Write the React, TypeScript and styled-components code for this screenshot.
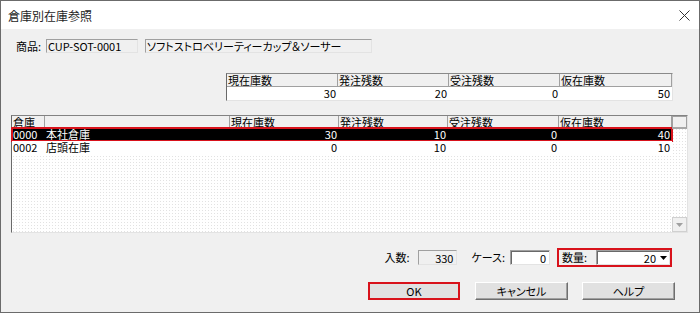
import React from "react";
import styled, { createGlobalStyle } from "styled-components";

const RED = "#d8121b";

const GlobalStyle = createGlobalStyle`
  html, body { margin: 0; padding: 0; background: #ffffff; }
  body {
    font-family: "Noto Sans CJK JP", "Noto Sans", sans-serif;
    font-size: 11px;
    color: #000;
    font-feature-settings: "palt";
  }
  * { box-sizing: border-box; }
`;

const Window = styled.div`
  width: 700px;
  height: 313px;
  border: 1px solid #6b6b6b;
  background: #f0f0f0;
  display: flex;
  flex-direction: column;
  overflow: hidden;
`;

const TitleBar = styled.div`
  height: 28px;
  flex-shrink: 0;
  background: #ffffff;
  display: flex;
  align-items: center;
  justify-content: space-between;
  padding: 0 9px 0 7px;
  font-size: 12px;
  color: #1e1e1e;
`;

const GoodsRow = styled.div`
  margin-top: 10px;
  height: 14px;
  display: flex;
  align-items: center;
  padding-left: 15px;
`;

const Label = styled.span<{ w?: number }>`
  width: ${(p) => (p.w ? `${p.w}px` : "auto")};
  flex-shrink: 0;
  line-height: 13px;
  white-space: nowrap;
`;

const Field = styled.div<{ w: number; white?: boolean; right?: boolean; ml?: number; h?: number }>`
  width: ${(p) => p.w}px;
  height: ${(p) => p.h ?? 14}px;
  margin-left: ${(p) => p.ml ?? 0}px;
  flex-shrink: 0;
  background: ${(p) => (p.white ? "#ffffff" : "#f0f0f0")};
  border: 1px solid;
  border-color: #a0a0a0 #e3e3e3 #e3e3e3 #a0a0a0;
  box-shadow: ${(p) => (p.white ? "inset 1px 1px 0 #696969" : "none")};
  display: flex;
  align-items: center;
  justify-content: ${(p) => (p.right ? "flex-end" : "flex-start")};
  padding: 0 3px 0 ${(p) => (p.white ? 2 : 1)}px;
  line-height: 12px;
  white-space: nowrap;
`;

const Summary = styled.div`
  margin: 20px 0 0 225px;
  width: 447px;
  border: 1px solid;
  border-color: #8a8a8a #e3e3e3 #e3e3e3 #696969;
  display: grid;
  grid-template-columns: 111px 111px 111px 112px;
`;

const SumHead = styled.div`
  height: 13px;
  line-height: 12px;
  padding-left: 1px;
  background: #f0f0f0;
  border-right: 1px solid #a0a0a0;
  border-bottom: 1px solid #a0a0a0;
  white-space: nowrap;
`;

const SumValue = styled.div`
  height: 13px;
  line-height: 13px;
  background: #ffffff;
  text-align: right;
  padding-right: 2px;
`;

const List = styled.div`
  margin: 14px 0 0 10px;
  width: 677px;
  height: 118px;
  border: 1px solid;
  border-color: #828282 #e3e3e3 #e3e3e3 #696969;
  display: flex;
  background-color: #ffffff;
  background-image: radial-gradient(#e2e2e2 0.7px, transparent 0.8px);
  background-size: 3px 3px;
`;

const ListMain = styled.div`
  width: 660px;
  display: flex;
  flex-direction: column;
`;

const cols = "33px 185px 109px 109px 111px 113px";

const HeadRow = styled.div`
  display: grid;
  grid-template-columns: ${cols};
  height: 12px;
  background: #f0f0f0;
  border-bottom: 1px solid #a0a0a0;
`;

const HeadCell = styled.div`
  line-height: 12px;
  padding-left: 1px;
  border-right: 1px solid #a0a0a0;
  white-space: nowrap;
`;

const Row = styled.div<{ selected?: boolean }>`
  display: grid;
  grid-template-columns: ${cols};
  height: 13px;
  background: ${(p) => (p.selected ? "#000000" : "#ffffff")};
  color: ${(p) => (p.selected ? "#ffffff" : "#000000")};
  outline: ${(p) => (p.selected ? `2px solid ${RED}` : "none")};
  outline-offset: -1px;
`;

const Cell = styled.div<{ right?: boolean }>`
  line-height: 13px;
  padding: 0 2px 0 1px;
  text-align: ${(p) => (p.right ? "right" : "left")};
  white-space: nowrap;
`;

const ScrollCol = styled.div`
  width: 15px;
  display: flex;
  flex-direction: column;
  justify-content: space-between;
`;

const ScrollTop = styled.div`
  height: 13px;
  background: #f0f0f0;
  border: 1px solid #a0a0a0;
  border-bottom: 2px solid #a8a8a8;
`;

const ScrollBtn = styled.div`
  height: 15px;
  background: #f0f0f0;
  border: 1px solid #d0d0d0;
  display: flex;
  align-items: center;
  justify-content: center;
`;

const ControlsRow = styled.div`
  margin-top: 15px;
  height: 19px;
  display: flex;
  align-items: center;
  justify-content: flex-end;
  padding-right: 27px;
`;

const QtyGroup = styled.div`
  margin-left: 7px;
  width: 115px;
  height: 19px;
  border: 2px solid ${RED};
  display: flex;
  align-items: center;
  padding-left: 3px;
`;

const Combo = styled.div`
  width: 74px;
  height: 15px;
  background: #ffffff;
  border: 1px solid;
  border-color: #a0a0a0 #e3e3e3 #e3e3e3 #a0a0a0;
  box-shadow: inset 1px 1px 0 #696969;
  display: flex;
  align-items: center;
  justify-content: flex-end;
  gap: 4px;
  padding-right: 2px;
  line-height: 12px;
`;

const ButtonRow = styled.div`
  margin-top: 15px;
  display: flex;
  justify-content: flex-end;
  gap: 14px;
  padding-right: 24px;
`;

const Button = styled.div<{ w: number; focus?: boolean; ml?: number }>`
  width: ${(p) => p.w}px;
  height: 18px;
  margin-left: ${(p) => p.ml ?? 0}px;
  background: #e1e1e1;
  border: ${(p) => (p.focus ? `2px solid ${RED}` : "1px solid")};
  border-color: ${(p) => (p.focus ? RED : "#ffffff #6f6f6f #6f6f6f #ffffff")};
  box-shadow: ${(p) => (p.focus ? "none" : "inset -1px -1px 0 #a0a0a0")};
  display: flex;
  align-items: center;
  justify-content: center;
  font-size: 11px;
  line-height: 12px;
`;

const summary = [
  { label: "現在庫数", value: "30" },
  { label: "発注残数", value: "20" },
  { label: "受注残数", value: "0" },
  { label: "仮在庫数", value: "50" },
];

const rows = [
  { code: "0000", name: "本社倉庫", nums: ["30", "10", "0", "40"], selected: true },
  { code: "0002", name: "店頭在庫", nums: ["0", "10", "0", "10"], selected: false },
];

const CloseIcon = () => (
  <svg width="11" height="11" viewBox="0 0 11 11">
    <path d="M0.5 0.5 L10.5 10.5 M10.5 0.5 L0.5 10.5" stroke="#333" strokeWidth="1" fill="none" />
  </svg>
);

const DownArrow = ({ color }: { color: string }) => (
  <svg width="7" height="4" viewBox="0 0 7 4">
    <path d="M0 0 H7 L3.5 4 Z" fill={color} />
  </svg>
);

export default function App() {
  return (
    <>
      <GlobalStyle />
      <Window>
        <TitleBar>
          <span>倉庫別在庫参照</span>
          <CloseIcon />
        </TitleBar>

        <GoodsRow>
          <Label w={30}>商品:</Label>
          <Field w={92}>CUP-SOT-0001</Field>
          <Field w={227} ml={7}>ソフトストロベリーティーカップ＆ソーサー</Field>
        </GoodsRow>

        <Summary>
          {summary.map((s) => (
            <SumHead key={s.label}>{s.label}</SumHead>
          ))}
          {summary.map((s) => (
            <SumValue key={s.label}>{s.value}</SumValue>
          ))}
        </Summary>

        <List>
          <ListMain>
            <HeadRow>
              <HeadCell>倉庫</HeadCell>
              <HeadCell />
              {summary.map((s) => (
                <HeadCell key={s.label}>{s.label}</HeadCell>
              ))}
            </HeadRow>
            {rows.map((r) => (
              <Row key={r.code} selected={r.selected}>
                <Cell>{r.code}</Cell>
                <Cell>{r.name}</Cell>
                {r.nums.map((n, i) => (
                  <Cell key={i} right>
                    {n}
                  </Cell>
                ))}
              </Row>
            ))}
          </ListMain>
          <ScrollCol>
            <ScrollTop />
            <ScrollBtn>
              <DownArrow color="#a0a0a0" />
            </ScrollBtn>
          </ScrollCol>
        </List>

        <ControlsRow>
          <Label>入数:</Label>
          <Field w={39} h={15} right ml={9}>330</Field>
          <Label style={{ marginLeft: 14 }}>ケース:</Label>
          <Field w={40} h={15} right white ml={5}>0</Field>
          <QtyGroup>
            <Label w={34}>数量:</Label>
            <Combo>
              <span>20</span>
              <DownArrow color="#000" />
            </Combo>
          </QtyGroup>
        </ControlsRow>

        <ButtonRow>
          <Button w={92} focus>OK</Button>
          <Button w={93} ml={1}>キャンセル</Button>
          <Button w={93}>ヘルプ</Button>
        </ButtonRow>
      </Window>
    </>
  );
}
